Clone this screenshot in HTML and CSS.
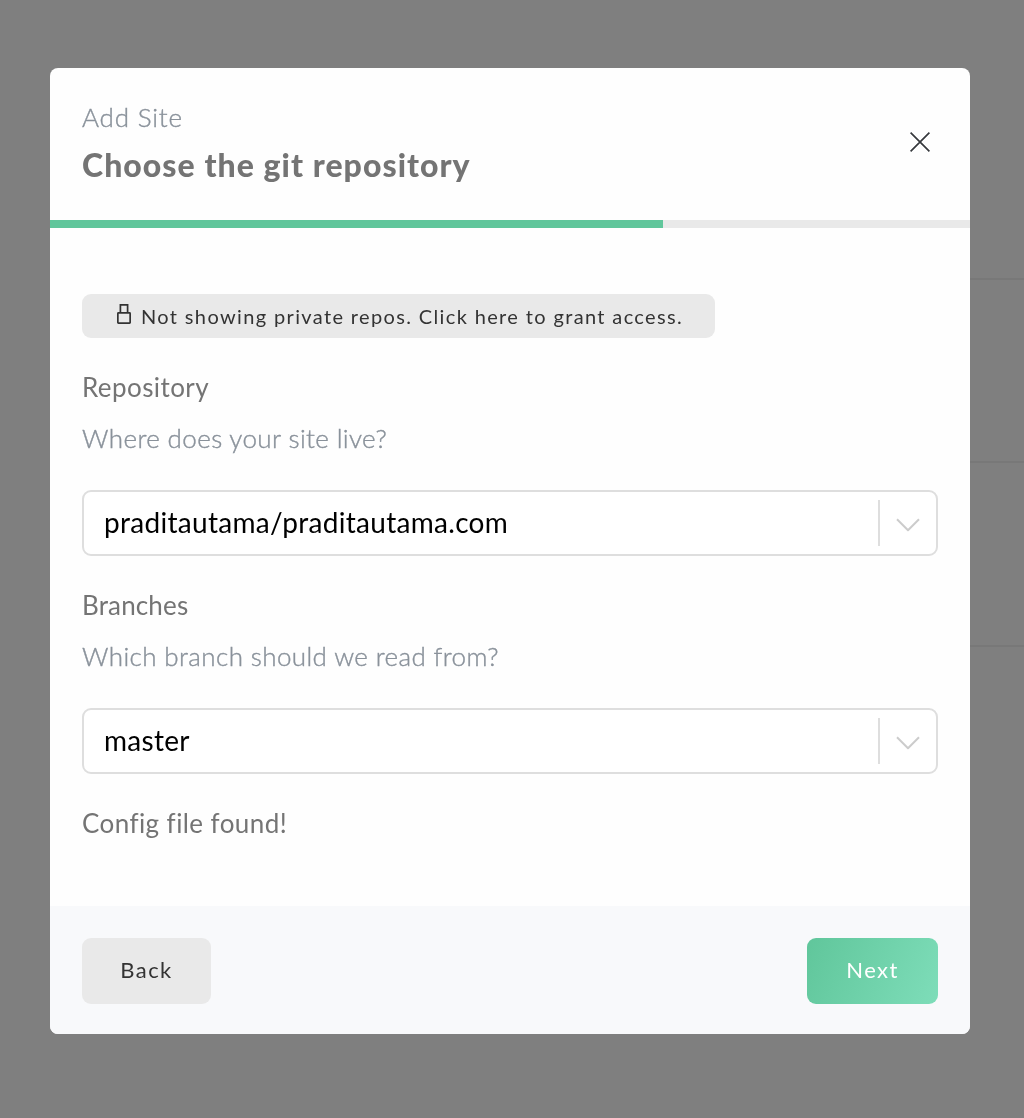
FILE: index.html
```html
<!DOCTYPE html>
<html lang="en">
<head>
  <meta charset="UTF-8" />
  <meta name="viewport" content="width=device-width, initial-scale=1.0" />
  <title>Add Site</title>
  <link rel="stylesheet" href="styles.css">
</head>
<body>
  <div class="site-list">
    <div class="site-row"></div>
    <div class="site-row"></div>
    <div class="site-row"></div>
  </div>

  <div class="overlay">
    <div class="modal" role="dialog" aria-labelledby="modal-title">
      <header class="modal-header">
        <div>
          <p class="eyebrow">Add Site</p>
          <h1 class="title" id="modal-title">Choose the git repository</h1>
        </div>
        <button class="close" aria-label="Close">
          <svg width="20" height="20" viewBox="0 0 20 20" fill="none" stroke="#36393d" stroke-width="1.7">
            <path d="M.6.6l18.8 18.8M19.4.6L.6 19.4" />
          </svg>
        </button>
      </header>

      <div class="progress-bar">
        <div class="progress-fill" style="width: 66.63%"></div>
      </div>

      <div class="modal-body">
        <button class="grant">
          <svg class="lock" width="14" height="20" viewBox="0 0 14 20" fill="none" stroke="#333" stroke-width="1.7">
            <rect x=".85" y="8.85" width="12.3" height="10.3" rx=".6" />
            <path d="M3.4 8.8V.9h7.2v7.9" />
          </svg>
          <span>Not showing private repos. Click here to grant access.</span>
        </button>

        <h2 class="label">Repository</h2>
        <p class="hint">Where does your site live?</p>
        <div class="select">
          <div class="select-value">praditautama/praditautama.com</div>
          <div class="select-arrow">
            <svg width="24" height="14" viewBox="0 0 24 14" fill="none" stroke="#ccc" stroke-width="2">
              <path d="M1 1.2l11 11 11-11" stroke-linejoin="round" />
            </svg>
          </div>
        </div>

        <h2 class="label label-branches">Branches</h2>
        <p class="hint">Which branch should we read from?</p>
        <div class="select">
          <div class="select-value">master</div>
          <div class="select-arrow">
            <svg width="24" height="14" viewBox="0 0 24 14" fill="none" stroke="#ccc" stroke-width="2">
              <path d="M1 1.2l11 11 11-11" stroke-linejoin="round" />
            </svg>
          </div>
        </div>

        <p class="label">Config file found!</p>
      </div>

      <footer class="modal-footer">
        <button class="btn btn-secondary">Back</button>
        <button class="btn btn-primary">Next</button>
      </footer>
    </div>
  </div>
</body>
</html>
```

FILE: styles.css
```css
* {
  margin: 0;
  padding: 0;
  box-sizing: border-box;
}

body {
  font-family: Lato, sans-serif;
  background: #fff;
  height: 1118px;
  overflow: hidden;
}

button {
  font-family: inherit;
  border: none;
  cursor: pointer;
}

.site-list {
  margin-left: 64px;
}

.site-row {
  height: 184px;
  border-bottom: 2px solid #f0f0f0;
}

.site-row:first-child {
  height: 280px;
}

.site-row:nth-child(2) {
  height: 183px;
}

.overlay {
  position: fixed;
  inset: 0;
  padding: 68px 54px 84px 50px;
  background: rgba(0, 0, 0, 0.5);
}

.modal {
  display: flex;
  flex-direction: column;
  height: 966px;
  background: #fefefe;
  border-radius: 8px;
  overflow: hidden;
}

.modal-header {
  display: flex;
  justify-content: space-between;
  align-items: center;
  height: 152px;
  padding: 0 40px 4px 32px;
}

.modal-header > div {
  padding-top: 5px;
}

.eyebrow {
  font-size: 26px;
  font-weight: 300;
  line-height: 40px;
  letter-spacing: 0.8px;
  color: #8a929b;
  -webkit-text-stroke: 0.4px #8a929b;
}

.title {
  font-size: 32px;
  font-weight: 900;
  line-height: 56px;
  letter-spacing: 1.04px;
  color: #747474;
}

.close {
  display: flex;
  background: none;
}

.progress-bar {
  height: 8px;
  background: #e9e9e9;
}

.progress-fill {
  height: 100%;
  background: #60c69b;
}

.modal-body {
  flex: 1;
  padding: 66px 32px 0;
}

.grant {
  display: flex;
  align-items: center;
  gap: 10px;
  width: 633px;
  height: 44px;
  padding: 0 35px;
  background: #e9e9e9;
  border-radius: 9px;
  font-size: 20px;
  letter-spacing: 1.36px;
  white-space: nowrap;
  color: #333;
}

.lock {
  flex: none;
  margin-top: -4px;
}

.label {
  margin-top: 29px;
  font-size: 26px;
  font-weight: 400;
  line-height: 40px;
  letter-spacing: 0.42px;
  color: #747474;
}

.label-branches {
  letter-spacing: 0.15px;
}

.hint {
  margin-top: 11px;
  font-size: 26px;
  font-weight: 300;
  line-height: 40px;
  letter-spacing: 0.38px;
  color: #8a929b;
  -webkit-text-stroke: 0.4px #8a929b;
}

.select {
  display: flex;
  align-items: center;
  height: 66px;
  margin-top: 32px;
  background: #fff;
  border: 2px solid #dedede;
  border-radius: 9px;
}

.select-value {
  flex: 1;
  padding: 0 0 2px 20px;
  font-size: 28px;
  letter-spacing: 0.3px;
  color: #000;
}

.select-arrow {
  display: flex;
  align-items: center;
  justify-content: center;
  width: 58px;
  height: 46px;
  padding-top: 3px;
  border-left: 2px solid #dedede;
}

.modal-footer {
  display: flex;
  justify-content: space-between;
  height: 128px;
  padding: 32px;
  background: #f8f9fb;
}

.btn {
  height: 66px;
  padding-bottom: 3px;
  border-radius: 9px;
  font-size: 22px;
  letter-spacing: 1.4px;
}

.btn-secondary {
  width: 129px;
  background: #e9e9e9;
  color: #333;
}

.btn-primary {
  width: 131px;
  background: linear-gradient(113deg, #60c69b, #7eddb9);
  color: #fff;
}
```
